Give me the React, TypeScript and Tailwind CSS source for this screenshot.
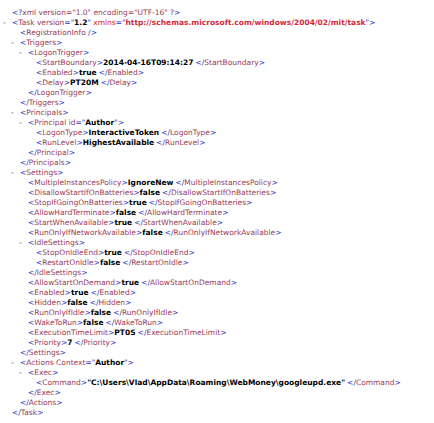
type Attr = { name: string; value: string; ns?: boolean };
type Node = { tag: string; attrs?: Attr[]; text?: string; children?: Node[] };

const doc: Node = {
  tag: 'Task',
  attrs: [
    { name: 'version', value: '1.2' },
    { name: 'xmlns', value: 'http://schemas.microsoft.com/windows/2004/02/mit/task', ns: true },
  ],
  children: [
    { tag: 'RegistrationInfo' },
    {
      tag: 'Triggers',
      children: [
        {
          tag: 'LogonTrigger',
          children: [
            { tag: 'StartBoundary', text: '2014-04-16T09:14:27' },
            { tag: 'Enabled', text: 'true' },
            { tag: 'Delay', text: 'PT20M' },
          ],
        },
      ],
    },
    {
      tag: 'Principals',
      children: [
        {
          tag: 'Principal',
          attrs: [{ name: 'id', value: 'Author' }],
          children: [
            { tag: 'LogonType', text: 'InteractiveToken' },
            { tag: 'RunLevel', text: 'HighestAvailable' },
          ],
        },
      ],
    },
    {
      tag: 'Settings',
      children: [
        { tag: 'MultipleInstancesPolicy', text: 'IgnoreNew' },
        { tag: 'DisallowStartIfOnBatteries', text: 'false' },
        { tag: 'StopIfGoingOnBatteries', text: 'true' },
        { tag: 'AllowHardTerminate', text: 'false' },
        { tag: 'StartWhenAvailable', text: 'true' },
        { tag: 'RunOnlyIfNetworkAvailable', text: 'false' },
        {
          tag: 'IdleSettings',
          children: [
            { tag: 'StopOnIdleEnd', text: 'true' },
            { tag: 'RestartOnIdle', text: 'false' },
          ],
        },
        { tag: 'AllowStartOnDemand', text: 'true' },
        { tag: 'Enabled', text: 'true' },
        { tag: 'Hidden', text: 'false' },
        { tag: 'RunOnlyIfIdle', text: 'false' },
        { tag: 'WakeToRun', text: 'false' },
        { tag: 'ExecutionTimeLimit', text: 'PT0S' },
        { tag: 'Priority', text: '7' },
      ],
    },
    {
      tag: 'Actions',
      attrs: [{ name: 'Context', value: 'Author' }],
      children: [
        {
          tag: 'Exec',
          children: [{ tag: 'Command', text: '"C:\\Users\\Vlad\\AppData\\Roaming\\WebMoney\\googleupd.exe"' }],
        },
      ],
    },
  ],
};

const M = ({ children }: { children: React.ReactNode }) => <span className="text-[#2b35c8]">{children}</span>;
const T = ({ children }: { children: React.ReactNode }) => <span className="text-[#9a3a55]">{children}</span>;

function Attrs({ attrs }: { attrs?: Attr[] }) {
  if (!attrs) return null;
  return (
    <>
      {attrs.map((a) =>
        a.ns ? (
          <span key={a.name} className="text-[#d0283c]">
            {' '}
            {a.name}
            <M>="</M>
            <b>{a.value}</b>
            <M>"</M>
          </span>
        ) : (
          <span key={a.name}>
            <T> {a.name}</T>
            <M>="</M>
            <b className="text-black">{a.value}</b>
            <M>"</M>
          </span>
        )
      )}
    </>
  );
}

function Element({ node }: { node: Node }) {
  if (node.children) {
    return (
      <div>
        <div className="-ml-[9px] whitespace-nowrap">
          <span className="inline-block w-[9px] text-[#3a3a4a]">-</span>
          <M>&lt;</M>
          <T>{node.tag}</T>
          <Attrs attrs={node.attrs} />
          <M>&gt;</M>
        </div>
        <div className="pl-[8px]">
          {node.children.map((c, i) => (
            <Element key={i} node={c} />
          ))}
        </div>
        <div className="whitespace-nowrap">
          <M>&lt;/</M>
          <T>{node.tag}</T>
          <M>&gt;</M>
        </div>
      </div>
    );
  }
  if (node.text === undefined) {
    return (
      <div className="whitespace-nowrap">
        <M>&lt;</M>
        <T>{node.tag}</T>
        <Attrs attrs={node.attrs} />
        <M> /&gt;</M>
      </div>
    );
  }
  return (
    <div className="whitespace-nowrap">
      <M>&lt;</M>
      <T>{node.tag}</T>
      <M>&gt;</M>
      <b className="text-black mr-[2px]">{node.text}</b>
      <M>&lt;/</M>
      <T>{node.tag}</T>
      <M>&gt;</M>
    </div>
  );
}

export default function App() {
  return (
    <div className="w-[434px] h-[423px] overflow-hidden bg-white pt-[8px] pl-[12px] text-[7.5px] leading-[10px] font-['DejaVu_Sans',Verdana,sans-serif]">
      <div className="whitespace-nowrap">
        <M>&lt;?</M>
        <T>xml version="1.0" encoding="UTF-16"</T>
        <M> ?&gt;</M>
      </div>
      <Element node={doc} />
    </div>
  );
}
